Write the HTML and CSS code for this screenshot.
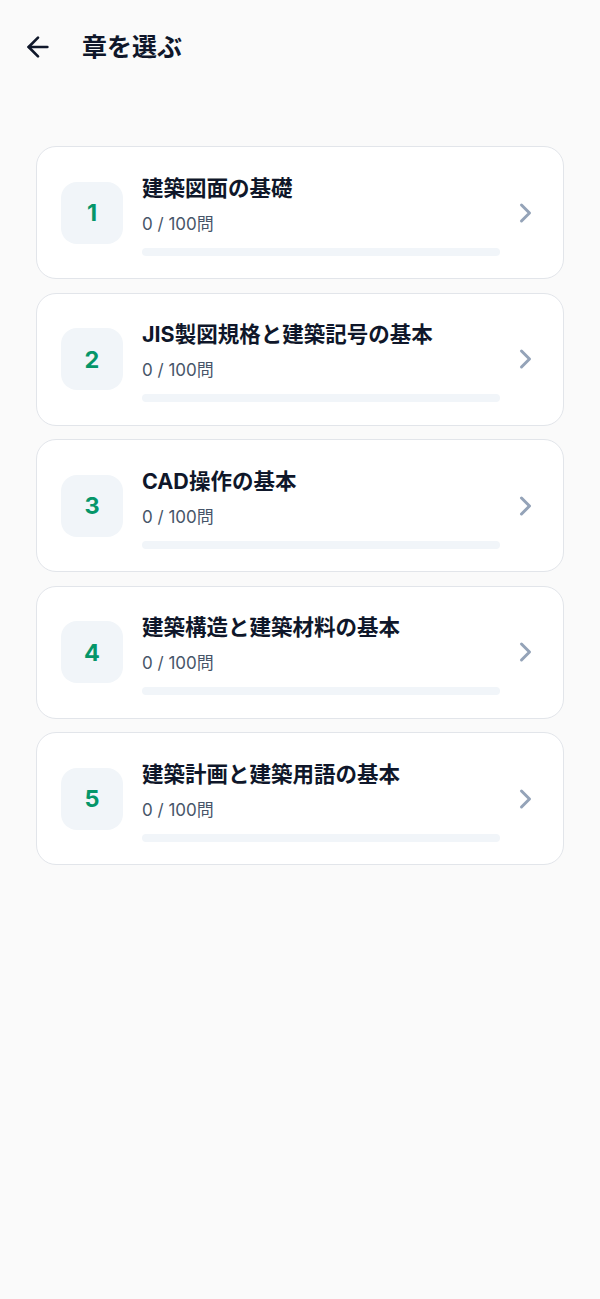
FILE: index.html
```html
<!DOCTYPE html>
<html lang="ja">
<head>
<meta charset="utf-8">
<title>章を選ぶ</title>
<link rel="stylesheet" href="styles.css">
</head>
<body>
<header class="header">
  <svg class="back" width="32" height="32" viewBox="0 0 24 24" fill="none" stroke="currentColor" stroke-width="2" stroke-linecap="round" stroke-linejoin="round"><path d="m12 19-7-7 7-7"/><path d="M19 12H5"/></svg>
  <h1 class="title">章を選ぶ</h1>
</header>
<main class="list">
  <div class="card">
    <div class="num">1</div>
    <div class="content">
      <div class="name">建築図面の基礎</div>
      <div class="count">0 / 100問</div>
      <div class="bar"><div class="fill" style="width:0%"></div></div>
    </div>
    <svg class="chev" width="14" height="22" viewBox="0 0 14 22" fill="none" stroke="currentColor" stroke-width="3" stroke-linecap="round" stroke-linejoin="round"><polyline points="2.5,3 10.5,11 2.5,19"/></svg>
  </div>
  <div class="card">
    <div class="num">2</div>
    <div class="content">
      <div class="name">JIS製図規格と建築記号の基本</div>
      <div class="count">0 / 100問</div>
      <div class="bar"><div class="fill" style="width:0%"></div></div>
    </div>
    <svg class="chev" width="14" height="22" viewBox="0 0 14 22" fill="none" stroke="currentColor" stroke-width="3" stroke-linecap="round" stroke-linejoin="round"><polyline points="2.5,3 10.5,11 2.5,19"/></svg>
  </div>
  <div class="card">
    <div class="num">3</div>
    <div class="content">
      <div class="name">CAD操作の基本</div>
      <div class="count">0 / 100問</div>
      <div class="bar"><div class="fill" style="width:0%"></div></div>
    </div>
    <svg class="chev" width="14" height="22" viewBox="0 0 14 22" fill="none" stroke="currentColor" stroke-width="3" stroke-linecap="round" stroke-linejoin="round"><polyline points="2.5,3 10.5,11 2.5,19"/></svg>
  </div>
  <div class="card">
    <div class="num">4</div>
    <div class="content">
      <div class="name">建築構造と建築材料の基本</div>
      <div class="count">0 / 100問</div>
      <div class="bar"><div class="fill" style="width:0%"></div></div>
    </div>
    <svg class="chev" width="14" height="22" viewBox="0 0 14 22" fill="none" stroke="currentColor" stroke-width="3" stroke-linecap="round" stroke-linejoin="round"><polyline points="2.5,3 10.5,11 2.5,19"/></svg>
  </div>
  <div class="card">
    <div class="num">5</div>
    <div class="content">
      <div class="name">建築計画と建築用語の基本</div>
      <div class="count">0 / 100問</div>
      <div class="bar"><div class="fill" style="width:0%"></div></div>
    </div>
    <svg class="chev" width="14" height="22" viewBox="0 0 14 22" fill="none" stroke="currentColor" stroke-width="3" stroke-linecap="round" stroke-linejoin="round"><polyline points="2.5,3 10.5,11 2.5,19"/></svg>
  </div>
</main>
</body>
</html>
```

FILE: styles.css
```css
html, body {
  margin: 0;
  padding: 0;
}
body {
  background: #fafafa;
  font-family: "Inter", "Noto Sans CJK JP", sans-serif;
  color: #0f172a;
  min-height: 1299px;
}
.header {
  display: flex;
  align-items: center;
  gap: 28px;
  padding: 31px 0 0 22px;
  height: 32px;
}
.back {
  display: block;
  color: #0f172a;
}
.title {
  margin: 0;
  font-size: 25px;
  line-height: 32px;
  font-weight: 700;
  color: #0f172a;
}
.list {
  display: flex;
  flex-direction: column;
  gap: 13.5px;
  padding: 0 36px;
  margin-top: 83px;
}
.card {
  box-sizing: border-box;
  height: 133px;
  display: flex;
  align-items: center;
  background: #ffffff;
  border: 1px solid #e2e5ea;
  border-radius: 20px;
  padding: 0 30px 0 24px;
}
.num {
  width: 62px;
  height: 62px;
  flex: none;
  border-radius: 16px;
  background: #f1f5f9;
  color: #059669;
  font-size: 23.5px;
  font-weight: 700;
  display: flex;
  align-items: center;
  justify-content: center;
}
.content {
  flex: 1;
  margin: 0 19px;
  padding-top: 4px;
}
.name {
  font-size: 21.5px;
  line-height: 28px;
  font-weight: 700;
  color: #0f172a;
  white-space: nowrap;
}
.count {
  margin-top: 10px;
  font-size: 17px;
  line-height: 24px;
  color: #475569;
}
.bar {
  margin-top: 12px;
  height: 8px;
  border-radius: 4px;
  background: #f1f5f9;
  overflow: hidden;
}
.fill {
  height: 100%;
  background: #059669;
}
.chev {
  display: block;
  flex: none;
  color: #94a3b8;
}
```
